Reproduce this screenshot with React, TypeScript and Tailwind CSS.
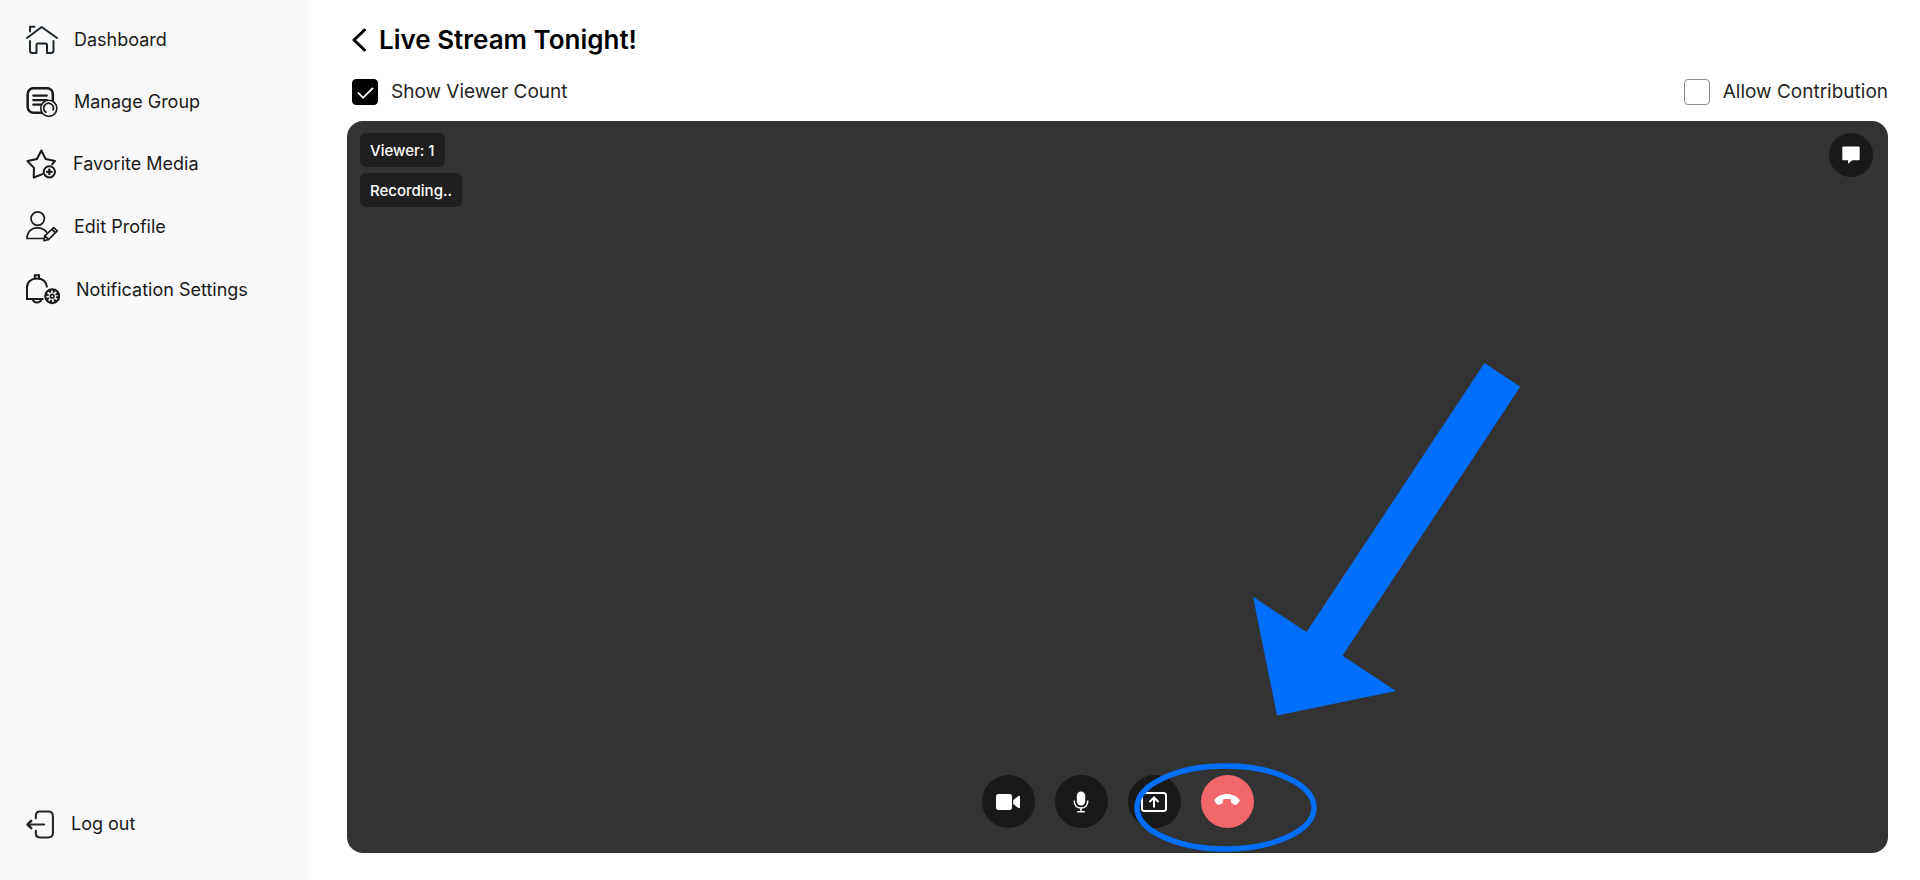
import type { ReactNode } from 'react'

type NavItem = {
  label: string
  icon: ReactNode
}

function HomeIcon() {
  return (
    <svg className="w-8 h-[30px] shrink-0" viewBox="0 0 32 30" fill="none" stroke="#1c262b" strokeWidth="2" strokeLinecap="round" strokeLinejoin="round">
      <path d="M1 13 L15.7 2 L31 13" />
      <path d="M4 6.5 V1.8 H8.5" />
      <path d="M4 16 V25.5 Q4 28 6.500 28 H10.500 V20 Q10.500 18.500 12 18.500 H19.500 Q21 18.500 21 20 V28 H25 Q27.500 28 27.500 25.500 V16" />
    </svg>
  )
}

function GroupIcon() {
  return (
    <svg className="w-8 h-[30px] shrink-0" viewBox="0 0 32 31" fill="none" stroke="#1a1a1a" strokeLinecap="round">
      <rect x="1.200" y="1.200" width="26" height="25.500" rx="6" strokeWidth="2.600" />
      <path d="M7 8.800 H21 M7 13.500 H21 M7 18.200 H15" strokeWidth="2.300" />
      <circle cx="23" cy="22" r="8.300" fill="#f8f8f8" strokeWidth="1.700" />
      <path d="M20 26 A5 5 0 1 1 27.500 23.500" strokeWidth="1.900" />
    </svg>
  )
}

function StarIcon() {
  return (
    <svg className="w-[31px] h-[30px] shrink-0" viewBox="0 0 31 31" fill="none" stroke="#1a1a1a" strokeWidth="2.100" strokeLinecap="round" strokeLinejoin="round">
      <path d="M16.500 26 L7.500 29.500 L7.700 19.500 L1 12.500 L10.800 10.300 L15.300 1.500 L19.800 10.300 L29.500 12.300 L26.500 16" />
      <circle cx="23.600" cy="23.600" r="5.800" />
      <path d="M23.600 21.200 V26 M21.200 23.600 H26" strokeWidth="2.300" />
    </svg>
  )
}

function ProfileIcon() {
  return (
    <svg className="w-8 h-[31px] shrink-0" viewBox="0 0 32 31" fill="none" stroke="#1a1a1a" strokeWidth="1.700" strokeLinecap="round" strokeLinejoin="round">
      <circle cx="11.700" cy="7.600" r="6.700" />
      <path d="M17.500 27.500 H1 C1 20.500 5.500 16.800 11.500 16.800 C15.500 16.800 18.500 18.300 20.500 21" />
      <path d="M18 29.800 L18.800 24.800 L27.700 16.600 L31.200 19.800 L22.700 28.500 Z M18.800 24.800 L22.700 28.500 M25.800 18.400 L29.400 21.600" />
    </svg>
  )
}

function BellIcon() {
  return (
    <svg className="w-[34px] h-[31px] shrink-0" viewBox="0 0 34 31" fill="none" stroke="#1a1a1a" strokeWidth="2">
      <path d="M17.500 25 H1 V13.500 C1 8 5 4.500 10.800 4.500 C16.800 4.500 20.500 8 21 13.500" />
      <path d="M8.800 4.500 V1.200 H13 V4.500 M6.500 25 C7.500 29.500 14.500 29.500 15.500 25" />
      <circle cx="26.200" cy="22.200" r="6.900" strokeWidth="2.200" />
      <circle cx="26.200" cy="22.200" r="5" strokeWidth="2.600" strokeDasharray="2 1.927" />
      <circle cx="26.200" cy="22.200" r="1.800" strokeWidth="1.600" />
    </svg>
  )
}

function LogoutIcon() {
  return (
    <svg className="w-[29px] h-[29px] shrink-0" viewBox="0 0 28 28" fill="none" stroke="#262626" strokeWidth="2" strokeLinecap="round" strokeLinejoin="round">
      <path d="M9.500 8 V5.500 Q9.500 1.500 13.500 1.500 H21.500 Q26 1.500 26 6 V22 Q26 26.500 21.500 26.500 H13.500 Q9.500 26.500 9.500 22.500 V20" />
      <path d="M17.500 14 H2" />
      <path d="M5 10.500 L1.500 14 L5 17.500" strokeWidth="2.400" />
    </svg>
  )
}

const navItems: NavItem[] = [
  { label: 'Dashboard', icon: <HomeIcon /> },
  { label: 'Manage Group', icon: <GroupIcon /> },
  { label: 'Favorite Media', icon: <StarIcon /> },
  { label: 'Edit Profile', icon: <ProfileIcon /> },
  { label: 'Notification Settings', icon: <BellIcon /> },
]

function Sidebar() {
  return (
    <aside className="w-[309px] shrink-0 bg-[#f8f8f8] flex flex-col justify-between pt-[25px] pb-[41px] pl-[26px]">
      <nav className="flex flex-col gap-8">
        {navItems.map((item) => (
          <a key={item.label} href="#" className="flex items-center gap-4 text-lg/[30px] text-[#1a1a1a]">
            {item.icon}
            {item.label}
          </a>
        ))}
      </nav>
      <button type="button" className="flex items-center gap-4 text-lg/[30px] text-[#1a1a1a]">
        <LogoutIcon />
        Log out
      </button>
    </aside>
  )
}

function Toggle({ label, defaultChecked }: { label: string; defaultChecked?: boolean }) {
  return (
    <label className="flex items-center gap-[13px] text-[19px]/[26px] text-[#262626]">
      <span className="relative flex w-[26px] h-[26px]">
        <input
          type="checkbox"
          defaultChecked={defaultChecked}
          className="peer appearance-none w-[26px] h-[26px] rounded border border-[#8c8c8c] bg-white checked:border-black checked:bg-black"
        />
        <svg className="absolute inset-0 w-[26px] h-[26px] hidden peer-checked:block pointer-events-none" viewBox="0 0 26 26" fill="none" stroke="#fff" strokeWidth="1.800">
          <path d="M6 13.500 L11 18.800 L21 9" />
        </svg>
      </span>
      {label}
    </label>
  )
}

function Controls() {
  const round = 'w-[53px] h-[53px] rounded-full flex items-center justify-center'
  return (
    <div className="flex justify-center gap-5">
      <button type="button" aria-label="Camera" className={`${round} bg-[#191919]`}>
        <svg className="w-6 h-4" viewBox="0 0 24 16" fill="#fff">
          <rect width="16" height="16" rx="2.500" />
          <path d="M17.200 6 L22 2.200 Q24 1 24 3 V13 Q24 15 22 13.800 L17.200 10 Z" />
        </svg>
      </button>
      <button type="button" aria-label="Microphone" className={`${round} bg-[#191919]`}>
        <svg className="w-4 h-[22px]" viewBox="0 0 16 22" fill="none" stroke="#fff" strokeWidth="1.500">
          <rect x="3.800" y="0.500" width="8.400" height="14" rx="4.200" fill="#fff" stroke="none" />
          <path d="M1.300 9.500 V10.500 C1.300 14.500 4 17 8 17 C12 17 14.700 14.500 14.700 10.500 V9.500 M8 17 V20.500 M4.300 20.700 H11.700" />
        </svg>
      </button>
      <button type="button" aria-label="Share screen" className={`${round} bg-[#191919]`}>
        <svg className="w-[26px] h-5" viewBox="0 0 26 20" fill="none" stroke="#fff" strokeWidth="2">
          <rect x="1" y="1" width="24" height="18" rx="2.500" />
          <path d="M13 15.500 V5.500 M8.500 10 L13 5.500 L17.500 10" />
        </svg>
      </button>
      <button type="button" aria-label="End stream" className={`${round} bg-[#f26769]`}>
        <svg className="w-[26px] h-5" viewBox="0 0 26 20" fill="#fff">
          <path d="M13 2 C18.500 2 22.500 4.300 25.300 7.500 C25.900 8.200 25.800 8.900 25.300 9.500 L22.800 12.600 C22.300 13.100 21.700 13.200 21 12.900 L17.800 11.300 C17.300 11 17.100 10.600 17 10 L16.800 7.300 C14.300 6.600 11.700 6.600 9.200 7.300 L9 10 C8.900 10.600 8.700 11 8.200 11.300 L5 12.900 C4.300 13.200 3.700 13.100 3.200 12.600 L0.700 9.500 C0.200 8.900 0.100 8.200 0.700 7.500 C3.500 4.300 7.500 2 13 2 Z" />
        </svg>
      </button>
    </div>
  )
}

export default function App() {
  return (
    <div className="min-h-screen flex bg-white font-['Inter',sans-serif]">
      <Sidebar />
      <main className="flex-1 flex flex-col pt-6 pb-[27px] pl-[38px] pr-8">
        <div className="flex items-center gap-[11px] pl-[5px]">
          <button type="button" aria-label="Back">
            <svg className="w-4 h-6" viewBox="0 0 16 24" fill="none" stroke="#000" strokeWidth="3" strokeLinecap="round" strokeLinejoin="round">
              <path d="M12.500 2 L2 12 L12.500 22" />
            </svg>
          </button>
          <h1 className="text-[26px]/8 font-semibold text-black">Live Stream Tonight!</h1>
        </div>

        <div className="flex justify-between pl-[5px] mt-[23px]">
          <Toggle label="Show Viewer Count" defaultChecked />
          <Toggle label="Allow Contribution" />
        </div>

        <section className="relative flex-1 mt-4 rounded-2xl bg-[#333333] flex flex-col justify-between pt-3 pb-[25px]">
          <div className="flex justify-between items-start pl-[13px] pr-[15px]">
            <div className="flex flex-col items-start gap-[6px] text-[15px]/8 font-medium text-white">
              <span className="rounded-md bg-[#1f1f1f] px-[10px] pt-[2px]">Viewer: 1</span>
              <span className="rounded-md bg-[#1f1f1f] px-[10px] pt-[2px]">Recording..</span>
            </div>
            <button type="button" aria-label="Chat" className="w-11 h-11 rounded-full bg-[#191919] flex items-center justify-center">
              <svg className="w-[18px] h-[18px]" viewBox="0 0 18 18" fill="#fff">
                <path d="M1.500 0.500 H16.500 Q17.700 0.500 17.700 1.700 V13 Q17.700 14.200 16.500 14.200 H10.300 L6 17.800 V14.200 H1.500 Q0.300 14.200 0.300 13 V1.700 Q0.300 0.500 1.500 0.500 Z" />
              </svg>
            </button>
          </div>

          <Controls />

          {/* Pointer to the end stream button */}
          <svg className="absolute left-1/2 bottom-[137px] ml-[134px] w-[270px] h-[354px] pointer-events-none" viewBox="0 0 270 354" fill="#006fff">
            <path d="M232.500 1 L268.200 24.700 L90.500 293.700 L143.800 329 L25 353.500 L1 234.700 L54.500 270 Z" />
          </svg>
          <svg className="absolute left-1/2 bottom-[1px] ml-4 w-[183px] h-[89px] pointer-events-none" viewBox="0 0 183 89" fill="none" stroke="#006fff" strokeWidth="5.500">
            <ellipse cx="91.500" cy="44.500" rx="88.500" ry="41.500" />
          </svg>
        </section>
      </main>
    </div>
  )
}
